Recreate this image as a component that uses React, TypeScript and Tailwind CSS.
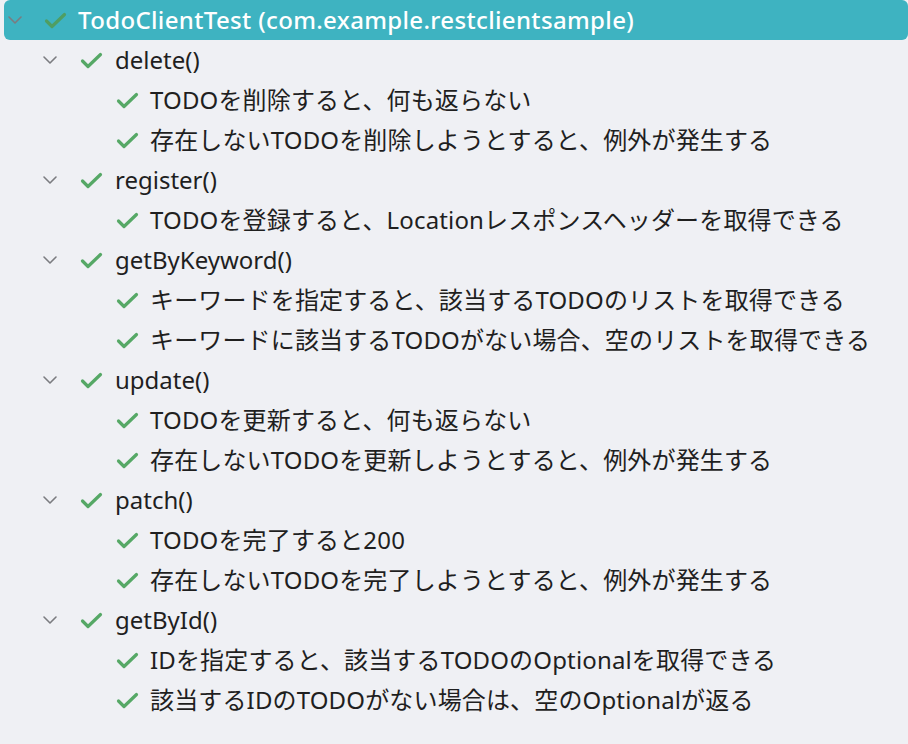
import { ReactNode } from 'react'

type Group = { name: string; tests: string[] }

const groups: Group[] = [
  { name: 'delete()', tests: ['TODOを削除すると、何も返らない', '存在しないTODOを削除しようとすると、例外が発生する'] },
  { name: 'register()', tests: ['TODOを登録すると、Locationレスポンスヘッダーを取得できる'] },
  {
    name: 'getByKeyword()',
    tests: ['キーワードを指定すると、該当するTODOのリストを取得できる', 'キーワードに該当するTODOがない場合、空のリストを取得できる'],
  },
  { name: 'update()', tests: ['TODOを更新すると、何も返らない', '存在しないTODOを更新しようとすると、例外が発生する'] },
  { name: 'patch()', tests: ['TODOを完了すると200', '存在しないTODOを完了しようとすると、例外が発生する'] },
  { name: 'getById()', tests: ['IDを指定すると、該当するTODOのOptionalを取得できる', '該当するIDのTODOがない場合は、空のOptionalが返る'] },
]

function Chevron() {
  return (
    <svg width="16" height="10" viewBox="0 0 16 10" fill="none" className="shrink-0">
      <path d="M2 2l6 6 6-6" stroke="#7b7c80" strokeWidth="1.6" strokeLinecap="round" strokeLinejoin="round" />
    </svg>
  )
}

function Check({ dark }: { dark?: boolean }) {
  return (
    <svg width="23" height="17" viewBox="0 0 23 17" fill="none" className="shrink-0">
      <path
        d="M2.5 9l5.5 5.5L20.5 2.5"
        stroke={dark ? '#4f9e62' : '#56a866'}
        strokeWidth="3.2"
        strokeLinecap="round"
        strokeLinejoin="round"
      />
    </svg>
  )
}

function Row({ children, className }: { children: ReactNode; className?: string }) {
  return <div className={`flex h-10 items-center ${className ?? ''}`}>{children}</div>
}

export default function App() {
  return (
    <div
      className="min-h-[744px] w-[908px] bg-[#eff0f4] text-[24px] text-[#1f1f1f]"
      style={{ fontFamily: '"Noto Sans", "Noto Sans CJK JP", sans-serif' }}
    >
      <div className="ml-1 flex h-10 items-center rounded-md bg-[#3eb3c1] text-white">
        <div className="ml-[3px] flex w-4 justify-center">
          <Chevron />
        </div>
        <div className="ml-[21px]">
          <Check dark />
        </div>
        <span className="ml-[11px] font-medium tracking-[0.35px]">TodoClientTest (com.example.restclientsample)</span>
      </div>
      {groups.map(g => (
        <div key={g.name}>
          <Row className="pl-[42px]">
            <Chevron />
            <div className="ml-[22px]">
              <Check />
            </div>
            <span className="ml-[12px]">{g.name}</span>
          </Row>
          {g.tests.map(t => (
            <Row key={t} className="pl-[116px]">
              <Check />
              <span className="ml-[11px] tracking-[0.15px]">{t}</span>
            </Row>
          ))}
        </div>
      ))}
    </div>
  )
}
